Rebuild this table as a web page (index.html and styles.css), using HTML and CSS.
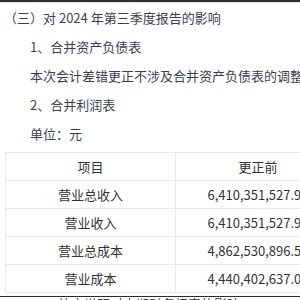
FILE: index.html
```html
<!DOCTYPE html>
<html lang="zh">
<head>
<meta charset="utf-8">
<link rel="stylesheet" href="styles.css">
</head>
<body>
<div class="page">
  <div class="topbar"></div>
  <div class="content">
    <p class="line">（三）对 2024 年第三季度报告的影响</p>
    <p class="line indent">1、合并资产负债表</p>
    <p class="line indent">本次会计差错更正不涉及合并资产负债表的调整。</p>
    <p class="line indent">2、合并利润表</p>
    <p class="line indent">单位：元</p>
  </div>
  <table class="report">
    <colgroup><col class="c1"><col class="c2"></colgroup>
    <tr><td>项目</td><td>更正前</td></tr>
    <tr><td>营业总收入</td><td>6,410,351,527.97</td></tr>
    <tr><td>营业收入</td><td>6,410,351,527.97</td></tr>
    <tr><td>营业总成本</td><td>4,862,530,896.58</td></tr>
    <tr><td>营业成本</td><td>4,440,402,637.04</td></tr>
  </table>
  <div class="rule"></div>
  <p class="tail">补充说明对本期财务报表的影响</p>
</div>
</body>
</html>
```
FILE: styles.css
```css
html, body {
  margin: 0;
  padding: 0;
  background: #ffffff;
}
.page {
  width: 300px;
  height: 300px;
  overflow: hidden;
  font-family: "Noto Sans CJK SC", "Noto Sans", sans-serif;
  font-size: 13px;
}
.topbar {
  height: 2px;
  background: #2e2e2e;
  border-bottom: 1px solid #e6e6e6;
}
.content {
  padding-left: 4px;
}
.line {
  margin: 0;
  height: 29px;
  line-height: 29px;
  white-space: nowrap;
  color: #3a3f52;
}
.indent {
  padding-left: 26px;
}
.report {
  margin: 4px 0 0 5px;
  border-collapse: collapse;
  table-layout: fixed;
  width: 335px;
  color: #333333;
}
.c1 { width: 170px; }
.c2 { width: 165px; }
.report td {
  border: 1px solid #e8e8e8;
  height: 27px;
  padding: 0;
  line-height: 27px;
  text-align: center;
  white-space: nowrap;
}
.rule {
  margin-top: 3px;
  height: 1px;
  background: #2a2a2a;
}
.tail {
  margin: 0;
  padding-left: 58px;
  line-height: 16px;
  margin-top: -1px;
  color: #2d3350;
  white-space: nowrap;
}
```
